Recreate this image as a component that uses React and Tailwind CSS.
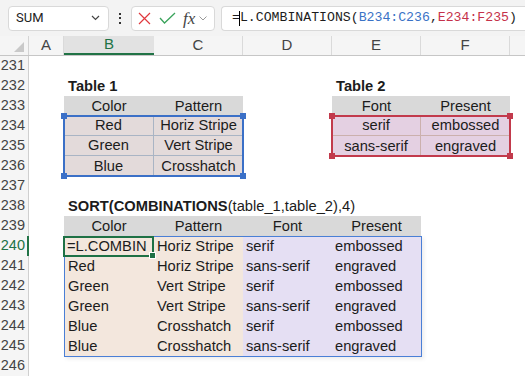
import React from "react";

const GRID = "grid grid-cols-[29px_35px_90px_89px_89px_89px_89px_1fr]";

function C({ children, cls = "" }) {
  return (
    <div className={"h-[20px] flex items-center whitespace-nowrap overflow-visible text-[14.7px] text-[#1c1c1c] " + cls}>
      {children}
    </div>
  );
}

function RH({ n, active }) {
  return active ? (
    <div className="h-[20px] flex items-center justify-end pr-[2px] bg-[#f5f5f5] border-r-2 border-[#217346] text-[#217346] text-[14.5px]">
      {n}
    </div>
  ) : (
    <div className="h-[20px] flex items-center justify-end pr-[3px] bg-[#f5f5f5] border-r border-[#cfcfcf] text-[#444] text-[14.5px]">
      {n}
    </div>
  );
}

const HD = "bg-[#d9d9d9] justify-center";
const T1 = "bg-[#e3dada] justify-center border-[#a9b4c4]";
const T2 = "bg-[#e4d0e2] justify-center border-[#cbb0ad]";
const R1 = "bg-[#f3e7dd] pl-[3px]";
const R2 = "bg-[#e5dff3] pl-[3px]";

function Empty() {
  return <C />;
}

export default function App() {
  return (
    <div className="w-[525px] h-[377px] overflow-hidden bg-white font-['Liberation_Sans',Arial,sans-serif] select-none">
      {/* Toolbar */}
      <div className="h-[36px] bg-[#f3f3f3] flex items-center">
        <div className="ml-[8px] w-[101px] h-[25px] bg-white border border-[#d9d9d9] rounded-[4px] flex items-center justify-between pl-[7px] pr-[8px]">
          <span className="text-[13px] font-['Roboto',sans-serif] text-[#222]">SUM</span>
          <svg width="9" height="6" viewBox="0 0 9 6">
            <path d="M1 1l3.5 3.5L8 1" fill="none" stroke="#444" strokeWidth="1.2" />
          </svg>
        </div>
        <div className="ml-[10px] w-[2px] flex flex-col gap-[2.5px]">
          <span className="w-[2px] h-[2px] bg-[#333]" />
          <span className="w-[2px] h-[2px] bg-[#333]" />
          <span className="w-[2px] h-[2px] bg-[#333]" />
        </div>
        <div className="ml-[10px] w-[84px] h-[25px] bg-white border border-[#d9d9d9] rounded-[4px] flex items-center">
          <svg className="ml-[6px]" width="13" height="13" viewBox="0 0 13 13">
            <path d="M1 1l11 11M12 1L1 12" stroke="#e0393e" strokeWidth="1.2" fill="none" />
          </svg>
          <svg className="ml-[8px]" width="17" height="12" viewBox="0 0 17 12">
            <path d="M1 6l4.5 5L16 1" stroke="#3aa35b" strokeWidth="1.3" fill="none" />
          </svg>
          <span className="ml-[7px] font-['Liberation_Serif',serif] italic text-[17px] leading-none text-[#444]">fx</span>
          <svg className="ml-[4px]" width="8" height="5" viewBox="0 0 8 5">
            <path d="M0.5 0.5l3.5 3.5L7.5 0.5" fill="none" stroke="#999" strokeWidth="1" />
          </svg>
        </div>
        <div className="ml-[6px] flex-1 h-[25px] bg-white border border-[#d9d9d9] border-r-0 rounded-l-[4px] flex items-center pl-[10px] font-['Liberation_Mono',monospace] text-[13.2px] text-[#1c1c1c] whitespace-nowrap">
          <span>=</span>
          <span className="inline-block w-px h-[15px] bg-black -ml-px" />
          <span>L.COMBINATIONS(</span>
          <span className="text-[#3a72c6]">B234:C236</span>
          <span>,</span>
          <span className="text-[#c5314a]">E234:F235</span>
          <span>)</span>
        </div>
      </div>

      {/* Column headers */}
      <div className={GRID + " h-[20px] bg-[#f5f5f5] border-b border-[#c6c6c6] text-[15px] text-[#444]"}>
        <div className="h-[19px] flex items-end justify-end pr-[4px] pb-[3px] border-r border-[#d4d4d4]">
          <svg width="10" height="10" viewBox="0 0 10 10">
            <polygon points="10,0 10,10 0,10" fill="#c9c9c9" />
          </svg>
        </div>
        <div className="h-[19px] flex items-center justify-center border-r border-[#dadada]">A</div>
        <div className="h-[19px] flex items-center justify-center bg-[#e2e2e2] border-b-2 border-[#217346] text-[#217346]">B</div>
        <div className="h-[19px] flex items-center justify-center border-r border-[#dadada]">C</div>
        <div className="h-[19px] flex items-center justify-center border-r border-[#dadada]">D</div>
        <div className="h-[19px] flex items-center justify-center border-r border-[#dadada]">E</div>
        <div className="h-[19px] flex items-center justify-center border-r border-[#dadada]">F</div>
        <div className="h-[19px]" />
      </div>

      {/* Sheet */}
      <div className="relative">
        <div className={GRID + " auto-rows-[20px]"}>
          {/* 231 */}
          <RH n={231} /><Empty /><Empty /><Empty /><Empty /><Empty /><Empty /><Empty />
          {/* 232 */}
          <RH n={232} /><Empty />
          <C cls="pl-[4px] font-bold">Table 1</C>
          <Empty /><Empty />
          <C cls="pl-[4px] font-bold">Table 2</C>
          <Empty /><Empty />
          {/* 233 */}
          <RH n={233} /><Empty />
          <C cls={HD}>Color</C>
          <C cls={HD}>Pattern</C>
          <Empty />
          <C cls={HD}>Font</C>
          <C cls={HD}>Present</C>
          <Empty />
          {/* 234 */}
          <RH n={234} /><Empty />
          <C cls={T1 + " border-r border-b"}>Red</C>
          <C cls={T1 + " border-b"}>Horiz Stripe</C>
          <Empty />
          <C cls={T2 + " border-r border-b"}>serif</C>
          <C cls={T2 + " border-b"}>embossed</C>
          <Empty />
          {/* 235 */}
          <RH n={235} /><Empty />
          <C cls={T1 + " border-r border-b"}>Green</C>
          <C cls={T1 + " border-b"}>Vert Stripe</C>
          <Empty />
          <C cls={T2 + " border-r"}>sans-serif</C>
          <C cls={T2}>engraved</C>
          <Empty />
          {/* 236 */}
          <RH n={236} /><Empty />
          <C cls={T1 + " border-r"}>Blue</C>
          <C cls={T1}>Crosshatch</C>
          <Empty /><Empty /><Empty /><Empty />
          {/* 237 */}
          <RH n={237} /><Empty /><Empty /><Empty /><Empty /><Empty /><Empty /><Empty />
          {/* 238 */}
          <RH n={238} /><Empty />
          <C cls="pl-[4px]">
            <span className="font-bold">SORT(COMBINATIONS</span>
            <span>(table_1,table_2),4)</span>
          </C>
          <Empty /><Empty /><Empty /><Empty /><Empty />
          {/* 239 */}
          <RH n={239} /><Empty />
          <C cls={HD}>Color</C>
          <C cls={HD}>Pattern</C>
          <C cls={HD}>Font</C>
          <C cls={HD}>Present</C>
          <Empty /><Empty />
          {/* 240 */}
          <RH n={240} active /><Empty />
          <C cls={R1 + " overflow-hidden"}>=L.COMBIN</C>
          <C cls={R1}>Horiz Stripe</C>
          <C cls={R2}>serif</C>
          <C cls={R2}>embossed</C>
          <Empty /><Empty />
          {/* 241 */}
          <RH n={241} /><Empty />
          <C cls={R1 + " pl-[4px]"}>Red</C>
          <C cls={R1}>Horiz Stripe</C>
          <C cls={R2}>sans-serif</C>
          <C cls={R2}>engraved</C>
          <Empty /><Empty />
          {/* 242 */}
          <RH n={242} /><Empty />
          <C cls={R1 + " pl-[4px]"}>Green</C>
          <C cls={R1}>Vert Stripe</C>
          <C cls={R2}>serif</C>
          <C cls={R2}>embossed</C>
          <Empty /><Empty />
          {/* 243 */}
          <RH n={243} /><Empty />
          <C cls={R1 + " pl-[4px]"}>Green</C>
          <C cls={R1}>Vert Stripe</C>
          <C cls={R2}>sans-serif</C>
          <C cls={R2}>engraved</C>
          <Empty /><Empty />
          {/* 244 */}
          <RH n={244} /><Empty />
          <C cls={R1 + " pl-[4px]"}>Blue</C>
          <C cls={R1}>Crosshatch</C>
          <C cls={R2}>serif</C>
          <C cls={R2}>embossed</C>
          <Empty /><Empty />
          {/* 245 */}
          <RH n={245} /><Empty />
          <C cls={R1 + " pl-[4px]"}>Blue</C>
          <C cls={R1}>Crosshatch</C>
          <C cls={R2}>sans-serif</C>
          <C cls={R2}>engraved</C>
          <Empty /><Empty />
          {/* 246 */}
          <RH n={246} /><Empty /><Empty /><Empty /><Empty /><Empty /><Empty /><Empty />
        </div>

        {/* Selection overlays */}
        <div className={GRID + " absolute inset-0 grid-rows-[repeat(16,20px)] pointer-events-none"}>
          <div className="col-start-3 col-end-5 row-start-4 row-end-7 relative -m-px border-2 border-[#3b70c7]">
            <span className="absolute -left-[4px] -top-[4px] w-[6px] h-[6px] bg-[#3b70c7]" />
            <span className="absolute -right-[4px] -top-[4px] w-[6px] h-[6px] bg-[#3b70c7]" />
            <span className="absolute -left-[4px] -bottom-[4px] w-[6px] h-[6px] bg-[#3b70c7]" />
            <span className="absolute -right-[4px] -bottom-[4px] w-[6px] h-[6px] bg-[#3b70c7]" />
          </div>
          <div className="col-start-6 col-end-8 row-start-4 row-end-6 relative -m-px border-2 border-[#c23a4c]">
            <span className="absolute -left-[4px] -top-[4px] w-[6px] h-[6px] bg-[#c23a4c]" />
            <span className="absolute -right-[4px] -top-[4px] w-[6px] h-[6px] bg-[#c23a4c]" />
            <span className="absolute -left-[4px] -bottom-[4px] w-[6px] h-[6px] bg-[#c23a4c]" />
            <span className="absolute -right-[4px] -bottom-[4px] w-[6px] h-[6px] bg-[#c23a4c]" />
          </div>
          <div className="col-start-3 col-end-7 row-start-10 row-end-16 -mr-px -mb-px border border-[#4a7fd6] shadow-[2px_2px_4px_rgba(0,0,0,0.08)]" />
          <div className="col-start-3 col-end-4 row-start-10 row-end-11 relative -ml-px -mb-px border-2 border-[#1e7145]">
            <span className="absolute -right-[3px] -bottom-[3px] w-[5px] h-[5px] bg-[#1e7145] ring-1 ring-white" />
          </div>
        </div>
      </div>
    </div>
  );
}
